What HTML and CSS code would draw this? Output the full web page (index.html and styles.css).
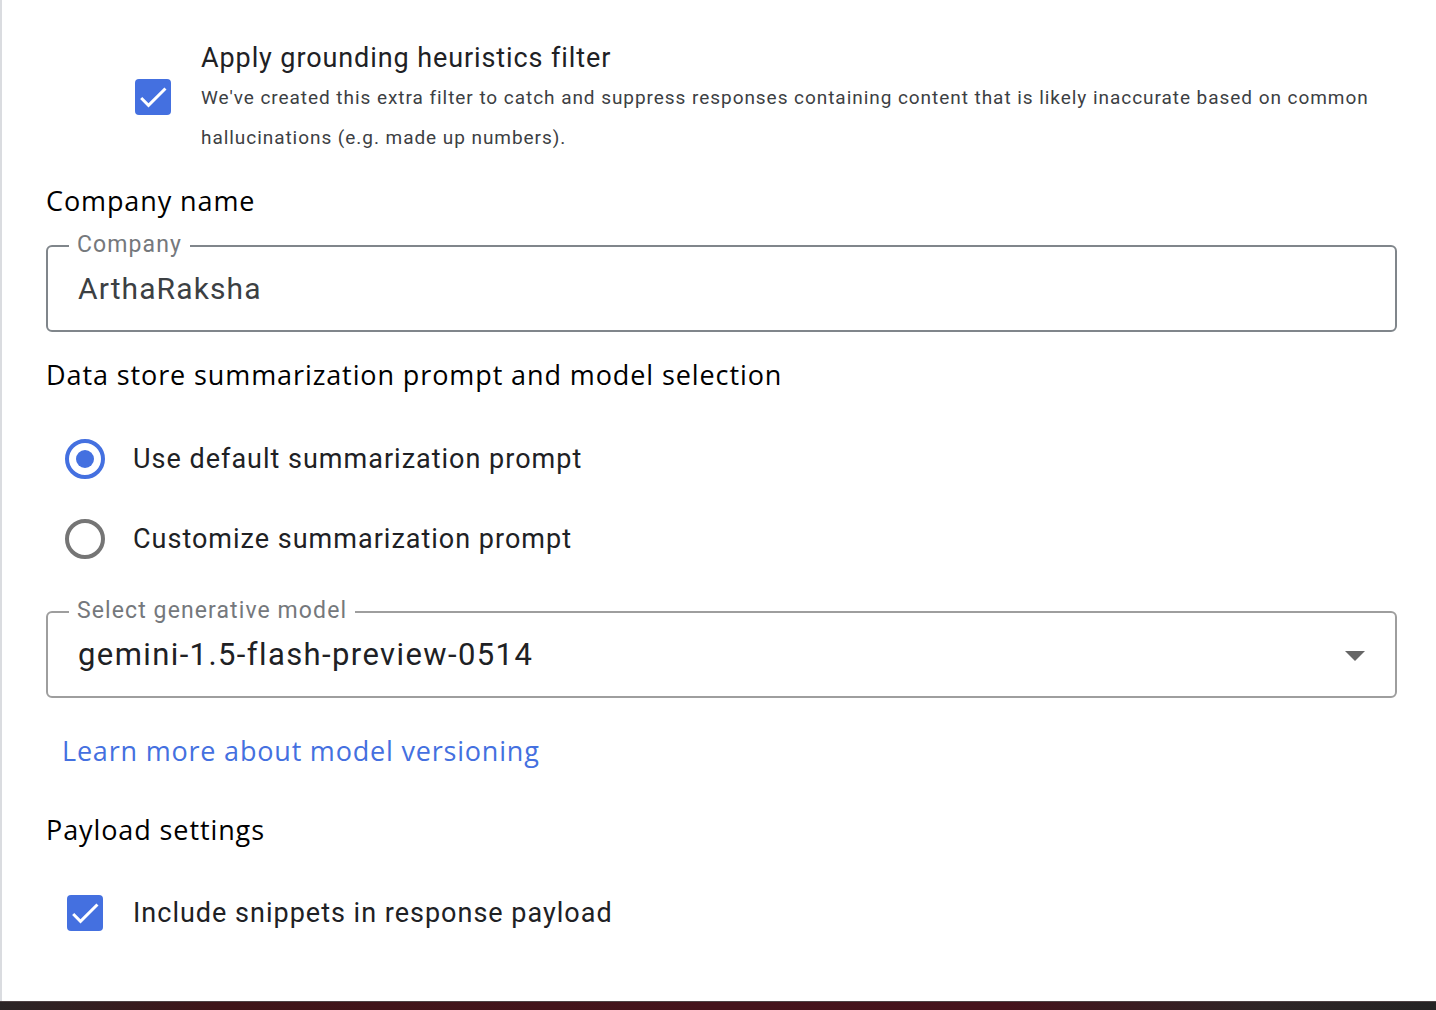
FILE: index.html
```html
<!DOCTYPE html>
<html>
<head>
<meta charset="utf-8">
<link rel="stylesheet" href="styles.css">
</head>
<body>
<div class="page">
  <div class="grounding">
    <div class="check-col">
      <span class="checkbox checked">
        <svg viewBox="0 0 24 24" width="36" height="36"><path d="M9 16.17L4.83 12l-1.42 1.41L9 19 21 7l-1.41-1.41z" fill="#fff"/></svg>
      </span>
    </div>
    <div class="grounding-text">
      <div class="grounding-title">Apply grounding heuristics filter</div>
      <div class="grounding-desc">We've created this extra filter to catch and suppress responses containing content that is likely inaccurate based on common hallucinations (e.g. made up numbers).</div>
    </div>
  </div>

  <h2 class="heading h-company">Company name</h2>
  <div class="outlined">
    <span class="float-label">Company</span>
    <span class="value">ArthaRaksha</span>
  </div>

  <h2 class="heading h-datastore">Data store summarization prompt and model selection</h2>
  <div class="radio-group">
    <label class="radio-row">
      <span class="radio selected"><span class="dot"></span></span>
      <span class="radio-label">Use default summarization prompt</span>
    </label>
    <label class="radio-row">
      <span class="radio"></span>
      <span class="radio-label">Customize summarization prompt</span>
    </label>
  </div>

  <div class="outlined select">
    <span class="float-label">Select generative model</span>
    <span class="value">gemini-1.5-flash-preview-0514</span>
    <span class="arrow"></span>
  </div>

  <a class="link" href="#">Learn more about model versioning</a>

  <h2 class="heading h-payload">Payload settings</h2>
  <div class="check-row">
    <span class="checkbox checked">
      <svg viewBox="0 0 24 24" width="36" height="36"><path d="M9 16.17L4.83 12l-1.42 1.41L9 19 21 7l-1.41-1.41z" fill="#fff"/></svg>
    </span>
    <span class="check-label">Include snippets in response payload</span>
  </div>
</div>
<div class="footer-bar"></div>
</body>
</html>
```

FILE: styles.css
```css
html, body {
  margin: 0;
  padding: 0;
  background: #fff;
}
body {
  font-family: Roboto, "Liberation Sans", Arial, sans-serif;
  color: #202124;
  width: 1436px;
  height: 1010px;
  overflow: hidden;
}
.page {
  height: 1001px;
  box-sizing: border-box;
  border-left: 2px solid #dadce0;
  padding: 41px 38px 0 44px;
  display: flex;
  flex-direction: column;
  align-items: flex-start;
}
.footer-bar {
  height: 9px;
  border-top: 1px solid #4e4244;
  box-sizing: border-box;
  background: linear-gradient(90deg, #2b2526 0%, #3f1519 15%, #45141c 50%, #46131c 70%, #2e2526 88%, #252324 100%);
}

/* grounding */
.grounding {
  display: flex;
  padding-left: 89px;
  gap: 30px;
}
.check-col {
  padding-top: 38px;
}
.checkbox {
  display: block;
  width: 36px;
  height: 36px;
  border-radius: 4px;
  background: #4470e0;
}
.checkbox svg { display: block; }
.grounding-title {
  font-size: 27px;
  line-height: 34px;
  letter-spacing: 0.9px;
  color: #202124;
}
.grounding-desc {
  margin-top: 3px;
  font-size: 19px;
  line-height: 40px;
  letter-spacing: 0.95px;
  color: #3c4043;
  width: 1190px;
}

/* headings */
.heading {
  margin: 0;
  font-family: "Open Sans", Lato, sans-serif;
  font-weight: 400;
  font-size: 27px;
  line-height: 32px;
  letter-spacing: 0.9px;
  color: #000;
}
.h-company { margin-top: 27px; }
.h-datastore { margin-top: 27px; }
.h-payload { margin-top: 47px; }

/* outlined fields */
.outlined {
  position: relative;
  margin-top: 28px;
  width: 1351px;
  height: 87px;
  box-sizing: border-box;
  border: 2px solid #80868b;
  border-radius: 6px;
  display: flex;
  align-items: center;
  padding-left: 30px;
}
.float-label {
  position: absolute;
  top: -16px;
  left: 21px;
  padding: 0 8px;
  background: #fff;
  font-size: 23px;
  line-height: 28px;
  letter-spacing: 1.1px;
  color: #75787c;
}
.value {
  font-size: 30px;
  line-height: 36px;
  letter-spacing: 1.1px;
  color: #3c4043;
}
.select {
  margin-top: 32px;
  border-color: #9e9e9e;
}
.select .value { color: #202124; font-size: 31px; letter-spacing: 1.4px; }
.arrow {
  position: absolute;
  right: 30px;
  top: 38px;
  width: 0;
  height: 0;
  border-left: 10px solid transparent;
  border-right: 10px solid transparent;
  border-top: 10px solid #666;
}

/* radios */
.radio-group {
  margin-top: 28px;
  display: flex;
  flex-direction: column;
}
.radio-row {
  display: flex;
  align-items: center;
  height: 80px;
  padding-left: 19px;
  gap: 28px;
}
.radio {
  width: 40px;
  height: 40px;
  box-sizing: border-box;
  border: 4px solid #757575;
  border-radius: 50%;
  display: flex;
  align-items: center;
  justify-content: center;
}
.radio.selected { border-color: #4470e0; }
.radio .dot {
  width: 18px;
  height: 18px;
  border-radius: 50%;
  background: #4470e0;
}
.radio-label, .check-label {
  font-size: 27px;
  line-height: 34px;
  letter-spacing: 1px;
  color: #202124;
}

/* link */
.link {
  margin-top: 37px;
  margin-left: 16px;
  font-family: "Open Sans", Lato, sans-serif;
  font-size: 27px;
  line-height: 32px;
  letter-spacing: 0.8px;
  color: #4470e0;
  text-decoration: none;
}

/* payload checkbox */
.check-row {
  margin-top: 37px;
  height: 60px;
  display: flex;
  align-items: center;
  padding-left: 21px;
  gap: 30px;
}
```
